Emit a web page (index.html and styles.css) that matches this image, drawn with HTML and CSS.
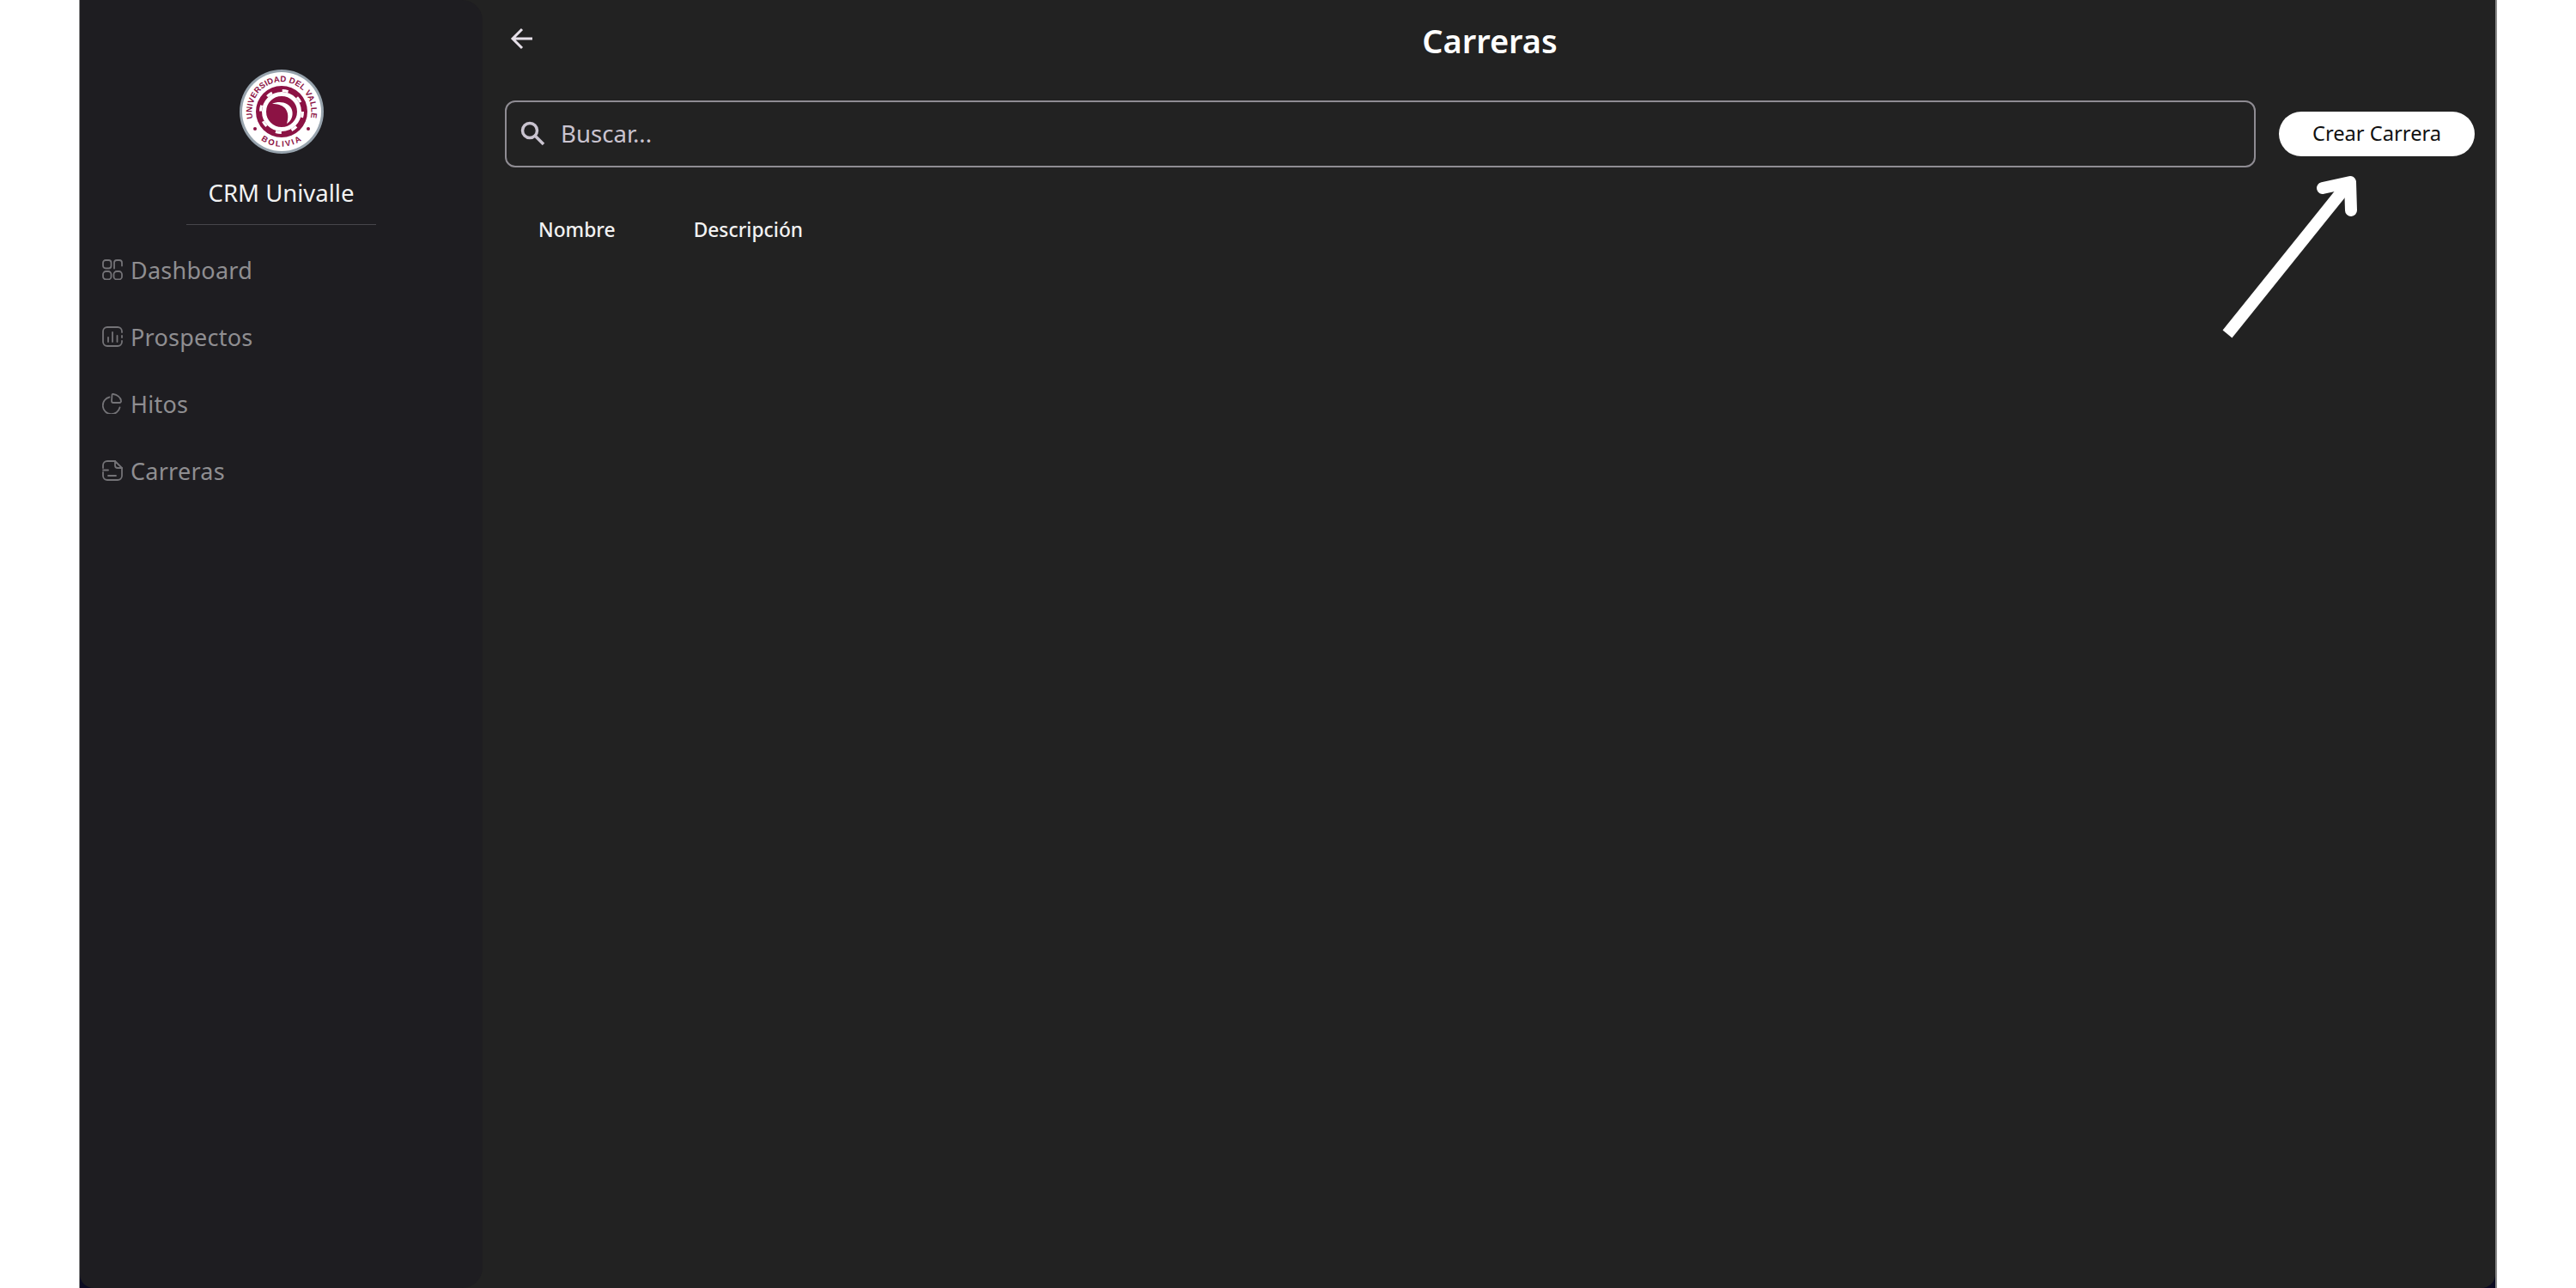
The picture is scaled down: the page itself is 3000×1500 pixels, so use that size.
FILE: index.html
```html
<!DOCTYPE html>
<html lang="es">
<head>
  <meta charset="UTF-8">
  <title>Carreras - CRM Univalle</title>
  <link rel="stylesheet" href="styles.css">
</head>
<body>

  <div class="app">
    <aside class="sidebar">
      <svg class="logo" viewBox="0 0 98 98" width="98" height="98">
        <defs>
          <path id="logoTop" d="M 15.500 57 A 34.500 34.500 0 1 1 82.500 57"/>
          <path id="logoBottom" d="M 25 82 A 41 41 0 0 0 73 82"/>
        </defs>
        <circle cx="49" cy="49" r="49" fill="#97a3ad"/>
        <circle cx="49" cy="49" r="46" fill="#fff"/>
        <circle cx="49" cy="49" r="30" fill="#8c1244"/>
        <circle cx="49" cy="49" r="24.500" fill="none" stroke="#fff" stroke-width="3" stroke-dasharray="7 12.240"/>
        <circle cx="49" cy="49" r="20.500" fill="none" stroke="#fff" stroke-width="5"/>
        <path d="M38 40 C46 36 58 38 61 47 C63 54 60 60 55 63 C57 56 57 50 53 45 C49 41 44 40 38 40Z" fill="#fff"/>
        <circle cx="18" cy="69" r="2" fill="#8c1244"/>
        <circle cx="80" cy="69" r="2" fill="#8c1244"/>
        <text class="logo-text"><textPath href="#logoTop" textLength="124">UNIVERSIDAD DEL VALLE</textPath></text>
        <text class="logo-text"><textPath href="#logoBottom" textLength="50">BOLIVIA</textPath></text>
      </svg>
      <div class="brand">CRM Univalle</div>
      <div class="divider"></div>

      <nav class="nav">
        <a class="nav-item">
          <svg class="nav-icon" viewBox="0 0 24 24">
            <rect x="1" y="1" width="9.500" height="9.500" rx="3"/>
            <path d="M14 10.500V4a3 3 0 0 1 3-3h3a3 3 0 0 1 3 3v3.500"/>
            <rect x="1" y="14" width="9.500" height="9.500" rx="3.500"/>
            <rect x="13.500" y="14" width="9.500" height="9.500" rx="3.500"/>
          </svg>
          Dashboard
        </a>
        <a class="nav-item">
          <svg class="nav-icon" viewBox="0 0 24 24">
            <path d="M23 7V6a5 5 0 0 0-5-5H6a5 5 0 0 0-5 5v12a5 5 0 0 0 5 5h12a5 5 0 0 0 5-5v-1"/>
            <path d="M7 13v5M12 7v11M17.500 11v7M23 11v2"/>
          </svg>
          Prospectos
        </a>
        <a class="nav-item">
          <svg class="nav-icon" viewBox="0 0 24 24">
            <path d="M8.500 4.500A10 10 0 1 0 20.500 16.500"/>
            <path d="M13 1a1 1 0 0 0-1.500 1l-.5 7a2 2 0 0 0 2 2h7.500a2 2 0 0 0 1.500-2.500C21.500 5 17.500 1.500 13 1Z"/>
          </svg>
          Hitos
        </a>
        <a class="nav-item">
          <svg class="nav-icon" viewBox="0 0 24 24">
            <path d="M15 1H6a5 5 0 0 0-5 5v3M1 14v4a5 5 0 0 0 5 5h12a5 5 0 0 0 5-5V9"/>
            <path d="M15 1l8 8h-5a3 3 0 0 1-3-3Z"/>
            <path d="M1 11.500h6M7 18h9"/>
          </svg>
          Carreras
        </a>
      </nav>
    </aside>

    <main class="main">
      <header class="top">
        <button class="back">
          <svg viewBox="0 0 28 28" width="28" height="28">
            <path d="M26 14H3M14 3 3 14l11 11"/>
          </svg>
        </button>
        <h1>Carreras</h1>
      </header>

      <div class="toolbar">
        <div class="search">
          <svg viewBox="0 0 30 30" width="30" height="30">
            <circle cx="12" cy="12" r="8.500"/>
            <path d="m18 18 10 10"/>
          </svg>
          <span>Buscar...</span>
        </div>
        <button class="create">Crear Carrera</button>
      </div>

      <table class="list">
        <thead>
          <tr>
            <th>Nombre</th>
            <th>Descripción</th>
          </tr>
        </thead>
      </table>
    </main>

    <!-- flecha que marca el boton -->
    <svg class="arrow" viewBox="0 0 170 200" width="170" height="200">
      <path class="arrow-line" d="M10 191 150 17"/>
      <path class="arrow-head" d="M121 21 153 14 154 47"/>
    </svg>
  </div>

</body>
</html>
```

FILE: styles.css
```css
* {
  box-sizing: border-box;
}

html, body {
  height: 100%;
}

body {
  margin: 0;
  background: #fff;
  font-family: 'Noto Sans', sans-serif;
  overflow: hidden;
}

.app {
  position: relative;
  display: flex;
  width: 2816px;
  height: 1500px;
  margin-left: 92px;
  background: #0b0b22;
  border-left: 1px solid #8a8a8a;
  border-right: 2px solid #8a8a8a;
}

.sidebar {
  width: 469px;
  padding-top: 81px;
  display: flex;
  flex-direction: column;
  align-items: center;
  background: #1e1d21;
  border-radius: 0 24px 24px 16px;
  box-shadow: 24px 0 0 #222;
}

.logo-text {
  font-family: 'Liberation Sans', sans-serif;
  font-size: 9.500px;
  font-weight: bold;
  fill: #8c1244;
}

.brand {
  margin-top: 27px;
  font-size: 27.500px;
  line-height: 38px;
  color: #f2f2f2;
}

.divider {
  width: 221px;
  height: 1px;
  margin-top: 17px;
  background: #47464b;
}

.nav {
  align-self: stretch;
  margin-top: 13px;
  padding-left: 26px;
}

.nav-item {
  display: flex;
  align-items: center;
  gap: 9px;
  height: 78px;
  font-size: 27px;
  letter-spacing: 0.250px;
  color: #8f8e91;
}

.nav-icon {
  width: 24px;
  height: 24px;
  fill: none;
  stroke: #747377;
  stroke-width: 1.800;
  stroke-linecap: round;
  stroke-linejoin: round;
}

.main {
  flex: 1;
  padding: 0 24px 0 26px;
  background: #222;
  border-radius: 0 0 16px 0;
}

.top {
  display: flex;
  align-items: center;
  justify-content: center;
  position: relative;
  height: 94px;
}

.back {
  position: absolute;
  left: 6px;
  top: 31px;
  padding: 0;
  border: none;
  background: none;
  display: flex;
}

.back path {
  fill: none;
  stroke: #e6e0e9;
  stroke-width: 3;
}

h1 {
  margin: 0;
  font-size: 38px;
  font-weight: 600;
  color: #fff;
}

.toolbar {
  display: flex;
  align-items: center;
  gap: 27px;
  margin-top: 23px;
}

.search {
  flex: 1;
  height: 78px;
  display: flex;
  align-items: center;
  gap: 18px;
  padding: 0 0 2px 15px;
  border: 2px solid #8f8c93;
  border-radius: 12px;
  font-size: 27.600px;
  color: #cac4d0;
}

.search svg {
  fill: none;
  stroke: #cac4d0;
  stroke-width: 3.500;
}

.create {
  width: 228px;
  height: 52px;
  padding: 0 0 2px;
  border: none;
  border-radius: 26px;
  background: #fff;
  color: #111;
  font-family: inherit;
  font-size: 23.700px;
}

.list {
  margin: 50px 0 0;
  border-collapse: collapse;
}

.list th {
  height: 44px;
  padding: 0 52px 0 39px;
  font-size: 22.800px;
  font-weight: 500;
  text-align: left;
  color: #f2f2f2;
}

.arrow {
  position: absolute;
  left: 2491px;
  top: 198px;
}

.arrow-line {
  fill: none;
  stroke: #fff;
  stroke-width: 14;
}

.arrow-head {
  fill: none;
  stroke: #fff;
  stroke-width: 14;
  stroke-linecap: round;
  stroke-linejoin: round;
}
```
